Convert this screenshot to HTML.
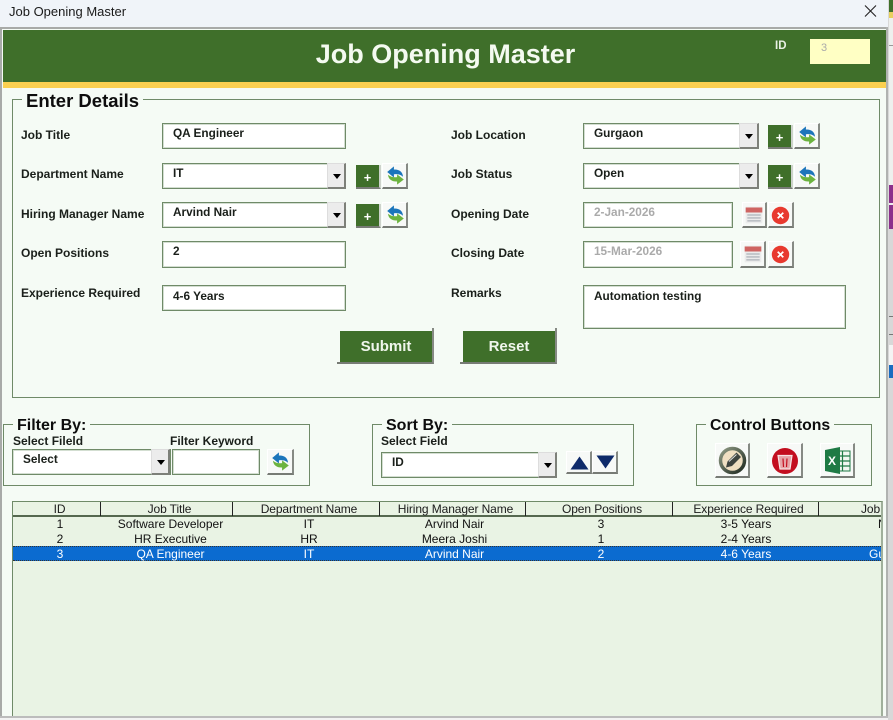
<!DOCTYPE html>
<html><head><meta charset="utf-8">
<style>
html,body{margin:0;padding:0;background:#f5fbf5}
#p{position:relative;width:893px;height:720px;overflow:hidden;background:#f5fbf5;font-family:"Liberation Sans",sans-serif;color:#111}
#p div{position:absolute;box-sizing:border-box}
.l{font-weight:bold;font-size:12px;line-height:16px;white-space:nowrap;color:#1a1f1a;margin-top:.5px}
.in{background:#fff;border:1px solid #6f8a68;box-shadow:inset 0 0 0 1px #d3ded1;font-weight:bold;font-size:11.8px;line-height:16px;padding:1px 0 0 10px;white-space:nowrap;color:#1a1f1a}
.ar{background:#ececec;border-right:2px solid #7d8079;border-bottom:2px solid #7d8079;border-left:1px solid #ddd;border-top:1px solid #ddd}
.ar:after{content:"";position:absolute;left:5px;top:10px;border-left:4.5px solid transparent;border-right:4.5px solid transparent;border-top:5px solid #000}
.b{background:#f7f9f7;border-right:2px solid #868a84;border-bottom:2px solid #777b75;border-top:1px solid #fff;border-left:1px solid #fff}
.g{background:#3f6f2a;border-right:2px solid #cdd2cb;border-bottom:2px solid #777b75;color:#fff;font-weight:bold;font-size:13px;text-align:center;line-height:19px}
.box{border:1px solid #6f8a68}
.lg{background:#f5fbf5;font-weight:bold;white-space:nowrap;padding:0 4px;color:#0d0d0d}
.th,.td{font-size:12px;line-height:15px;text-align:center;white-space:nowrap;overflow:hidden}
.th{top:502px;height:14px;line-height:15px;border-right:1px solid #222;color:#1b1b1b;letter-spacing:-.1px}
.s{color:#fff}
svg{position:absolute;left:0;top:0;display:block}
</style></head><body><div id="p">
<svg width="0" height="0" style="position:absolute"><defs>
<symbol id="rf" viewBox="0 0 24 24"><path d="M1.5 7.5 L10 0.5 L10 4.5 C16 4 21 7 21.5 13.5 C18 10.5 14 10 10 10.5 L10 14.5 Z" fill="#1b75bb"/><path d="M22.5 17 L14 23.5 L14 19.5 C8 20 3 17 2.5 11 C6 14 10 14.5 14 14 L14 10.5 Z" fill="#6cb33f"/></symbol>
<symbol id="cal" viewBox="0 0 24 24"><rect x="2" y="2" width="20" height="20" fill="#ebebeb"/><rect x="2" y="3" width="20" height="6" fill="#cf6462"/><g fill="#bcc0c5"><rect x="4" y="11" width="16" height="2"/><rect x="4" y="14.5" width="16" height="2"/><rect x="4" y="18" width="16" height="2"/></g></symbol>
<symbol id="xx" viewBox="0 0 24 24"><circle cx="12" cy="12" r="11" fill="#e8392f"/><path d="M8.5 8.5 L15.5 15.5 M15.5 8.5 L8.5 15.5" stroke="#fff" stroke-width="2.2"/></symbol>
<linearGradient id="ring" x1="0" y1="0" x2="1" y2="1"><stop offset="0" stop-color="#8f9a84"/><stop offset="1" stop-color="#1f2a20"/></linearGradient>
</defs></svg>

<!-- right sliver -->
<div style="left:888px;top:0;width:5px;height:720px;background:#d8d8d8"></div>
<div style="left:889px;top:0;width:4px;height:12px;background:#3f6f2a"></div>
<div style="left:889px;top:12px;width:4px;height:6px;background:#e8d060"></div>
<div style="left:889px;top:18px;width:4px;height:168px;background:#eef0ee"></div>
<div style="left:889px;top:45px;width:4px;height:1px;background:#999"></div>
<div style="left:889px;top:185px;width:4px;height:44px;background:#8c2f8c"></div>
<div style="left:889px;top:203px;width:4px;height:2px;background:#eee"></div>
<div style="left:889px;top:316px;width:4px;height:1px;background:#777"></div>
<div style="left:889px;top:334px;width:4px;height:1px;background:#777"></div>
<div style="left:889px;top:345px;width:4px;height:33px;background:#f4f4f4"></div>
<div style="left:889px;top:365px;width:4px;height:13px;background:#1a6cc0"></div>

<!-- title bar -->
<div style="left:0;top:0;width:888px;height:27px;background:#f0f4f9"></div>
<div style="left:9px;top:3px;font-size:13px;line-height:17px;color:#1a1a1a;white-space:nowrap">Job Opening Master</div>
<svg style="left:864px;top:5px" width="13" height="12" viewBox="0 0 13 12"><path d="M1 0.5 L12 11.5 M12 0.5 L1 11.5" stroke="#222" stroke-width="1.1" fill="none"/></svg>
<div style="left:0;top:27px;width:888px;height:2px;background:#a8aaa8"></div>
<div style="left:0;top:27px;width:2px;height:693px;background:#a8aaa8"></div>
<div style="left:886px;top:27px;width:2px;height:693px;background:#b0b2b0"></div>
<div style="left:0;top:716px;width:888px;height:2px;background:#bcbcbc"></div>
<div style="left:0;top:718px;width:888px;height:2px;background:#f2f2f2"></div>

<!-- header -->
<div style="left:3px;top:30px;width:883px;height:52px;background:#3f6f2a"></div>
<div style="left:3px;top:82px;width:883px;height:6px;background:#fbd050"></div>
<div style="left:3px;top:38px;width:885px;text-align:center;color:#f4faf0;font-weight:bold;font-size:27px;line-height:32px">Job Opening Master</div>
<div style="left:775px;top:38px;color:#e8f0e4;font-weight:bold;font-size:11.5px;line-height:16px">ID</div>
<div style="left:810px;top:39px;width:60px;height:25px;background:#ffffc4;color:#aaa;font-size:11px;line-height:18px;padding-left:11px">3</div>

<!-- enter details -->
<div class="box" style="left:12px;top:99px;width:868px;height:299px"></div>
<div class="lg" style="left:22px;top:90px;font-size:18.5px;line-height:21px">Enter Details</div>

<div class="l" style="left:21px;top:126px">Job Title</div>
<div class="l" style="left:21px;top:165px">Department Name</div>
<div class="l" style="left:21px;top:205px">Hiring Manager Name</div>
<div class="l" style="left:21px;top:244px">Open Positions</div>
<div class="l" style="left:21px;top:284px">Experience Required</div>
<div class="l" style="left:451px;top:126px">Job Location</div>
<div class="l" style="left:451px;top:165px">Job Status</div>
<div class="l" style="left:451px;top:205px">Opening Date</div>
<div class="l" style="left:451px;top:244px">Closing Date</div>
<div class="l" style="left:451px;top:284px">Remarks</div>

<div class="in" style="left:162px;top:123px;width:184px;height:26px">QA Engineer</div>
<div class="in" style="left:162px;top:163px;width:184px;height:26px">IT</div><div class="ar" style="left:327px;top:163px;width:19px;height:26px"></div>
<div class="in" style="left:162px;top:202px;width:184px;height:26px">Arvind Nair</div><div class="ar" style="left:327px;top:202px;width:19px;height:26px"></div>
<div class="in" style="left:162px;top:241px;width:184px;height:27px">2</div>
<div class="in" style="left:162px;top:285px;width:184px;height:26px;line-height:18px">4-6 Years</div>

<div class="in" style="left:583px;top:123px;width:176px;height:26px">Gurgaon</div><div class="ar" style="left:739px;top:123px;width:20px;height:26px"></div>
<div class="in" style="left:583px;top:163px;width:176px;height:26px">Open</div><div class="ar" style="left:739px;top:163px;width:20px;height:26px"></div>
<div class="in" style="left:583px;top:202px;width:150px;height:26px;color:#aaa">2-Jan-2026</div>
<div class="in" style="left:583px;top:241px;width:150px;height:27px;color:#aaa">15-Mar-2026</div>
<div class="in" style="left:583px;top:285px;width:263px;height:44px;line-height:18px">Automation testing</div>

<!-- + / refresh -->
<div class="g" style="left:356px;top:165px;width:25px;height:24px;line-height:25px">+</div>
<div class="b" style="left:382px;top:163px;width:26px;height:26px"><svg style="left:3px;top:2px" width="19" height="19"><use href="#rf"/></svg></div>
<div class="g" style="left:356px;top:204px;width:25px;height:24px;line-height:25px">+</div>
<div class="b" style="left:382px;top:202px;width:26px;height:26px"><svg style="left:3px;top:2px" width="19" height="19"><use href="#rf"/></svg></div>
<div class="g" style="left:768px;top:125px;width:25px;height:24px;line-height:25px">+</div>
<div class="b" style="left:794px;top:123px;width:26px;height:26px"><svg style="left:3px;top:2px" width="19" height="19"><use href="#rf"/></svg></div>
<div class="g" style="left:768px;top:165px;width:25px;height:24px;line-height:25px">+</div>
<div class="b" style="left:794px;top:163px;width:26px;height:26px"><svg style="left:3px;top:2px" width="19" height="19"><use href="#rf"/></svg></div>

<!-- date buttons -->
<div class="b" style="left:742px;top:202px;width:25px;height:26px"><svg style="left:1px;top:2px" width="20" height="20"><use href="#cal"/></svg></div>
<div class="b" style="left:768px;top:202px;width:26px;height:26px"><svg style="left:2px;top:3px" width="19" height="19"><use href="#xx"/></svg></div>
<div class="b" style="left:740px;top:241px;width:26px;height:27px"><svg style="left:2px;top:2px" width="20" height="20"><use href="#cal"/></svg></div>
<div class="b" style="left:768px;top:241px;width:26px;height:27px"><svg style="left:2px;top:3px" width="19" height="19"><use href="#xx"/></svg></div>

<!-- submit/reset -->
<div style="left:337px;top:328px;width:97px;height:36px;background:#f5fbf5;border-right:2px solid #868a84;border-bottom:2px solid #777b75"></div>
<div class="g" style="left:340px;top:331px;width:92px;height:31px;border:0;font-size:15px;line-height:31px;color:#f0f6ec">Submit</div>
<div style="left:460px;top:328px;width:97px;height:36px;background:#f5fbf5;border-right:2px solid #868a84;border-bottom:2px solid #777b75"></div>
<div class="g" style="left:463px;top:331px;width:92px;height:31px;border:0;font-size:15px;line-height:31px;color:#f0f6ec">Reset</div>

<!-- filter -->
<div class="box" style="left:3px;top:424px;width:307px;height:62px"></div>
<div class="lg" style="left:13px;top:417px;font-size:16px;line-height:18px">Filter By:</div>
<div class="l" style="left:13px;top:432px">Select Fileld</div>
<div class="l" style="left:170px;top:432px">Filter Keyword</div>
<div class="in" style="left:12px;top:449px;width:159px;height:26px">Select</div><div class="ar" style="left:151px;top:449px;width:19px;height:26px"></div>
<div class="in" style="left:172px;top:449px;width:88px;height:26px"></div>
<div class="b" style="left:267px;top:449px;width:27px;height:26px"><svg style="left:3px;top:2px" width="19" height="19"><use href="#rf"/></svg></div>

<!-- sort -->
<div class="box" style="left:372px;top:424px;width:262px;height:62px"></div>
<div class="lg" style="left:382px;top:417px;font-size:16px;line-height:18px">Sort By:</div>
<div class="l" style="left:381px;top:432px">Select Field</div>
<div class="in" style="left:381px;top:452px;width:176px;height:26px">ID</div><div class="ar" style="left:538px;top:452px;width:19px;height:26px"></div>
<div class="b" style="left:566px;top:451px;width:26px;height:23px"><svg style="left:3px;top:4px" width="19" height="14" viewBox="0 0 19 14"><path d="M9.5 0.5 L18.5 13.5 L0.5 13.5 Z" fill="#0e2a6a"/></svg></div>
<div class="b" style="left:592px;top:451px;width:26px;height:23px"><svg style="left:3px;top:3px" width="19" height="14" viewBox="0 0 19 14"><path d="M9.5 13.5 L18.5 0.5 L0.5 0.5 Z" fill="#0e2a6a"/></svg></div>

<!-- control -->
<div class="box" style="left:696px;top:424px;width:176px;height:62px"></div>
<div class="lg" style="left:706px;top:417px;font-size:15.8px;line-height:18px">Control Buttons</div>
<div class="b" style="left:715px;top:443px;width:35px;height:35px"><svg style="left:2px;top:2px" width="29" height="29" viewBox="0 0 29 29"><circle cx="14.5" cy="14.5" r="12" fill="#f0dfc2" stroke="url(#ring)" stroke-width="3.5"/><path d="M8 21.5 L9.5 15.5 L18.5 6.5 L23 11 L14 20 Z" fill="#3f443f"/><path d="M11 15.5 L18.5 8.5" stroke="#ddd" stroke-width="1"/></svg></div>
<div class="b" style="left:767px;top:443px;width:36px;height:35px"><svg style="left:3px;top:3px" width="28" height="28" viewBox="0 0 28 28"><circle cx="14" cy="14" r="13" fill="#c30e1f"/><path d="M7 8.5 L21 8.5 L19 22 L9 22 Z" fill="#e6a5a8" stroke="#f7e4e4" stroke-width="1.2"/><path d="M12 11.5 L12.5 20 M16 11.5 L15.5 20" stroke="#c30e1f" stroke-width="1.2"/></svg></div>
<div class="b" style="left:820px;top:443px;width:35px;height:35px"><svg style="left:2px;top:2px" width="29" height="29" viewBox="0 0 29 29"><rect x="12" y="5" width="15" height="20" fill="#f2f7f2" stroke="#1f7a45"/><path d="M12 10 H27 M12 15 H27 M12 20 H27 M19.5 5 V25" stroke="#1f7a45" stroke-width="1.2"/><path d="M2 4 L17 1 V28 L2 25 Z" fill="#1f7a45"/><text x="5" y="19" font-family="Liberation Sans" font-weight="bold" font-size="12" fill="#fff">X</text></svg></div>

<!-- table -->
<div style="left:12px;top:501px;width:871px;height:215px;background:#e9f3e4;border:1px solid #8ea389;border-top-color:#6f8a68;border-bottom:0;border-right:2px solid #a0b09b"></div>
<div style="left:12px;top:501px;width:1px;height:215px;background:#6f8a68"></div>
<div style="left:13px;top:515px;width:868px;height:1.5px;background:#55684f"></div>
<div class="th" style="left:13px;width:88px;padding-left:6px">ID</div>
<div class="th" style="left:101px;width:132px;padding-left:6px">Job Title</div>
<div class="th" style="left:233px;width:147px;padding-left:6px">Department Name</div>
<div class="th" style="left:380px;width:146px;padding-left:6px">Hiring Manager Name</div>
<div class="th" style="left:526px;width:147px;padding-left:6px">Open Positions</div>
<div class="th" style="left:673px;width:146px;padding-left:6px">Experience Required</div>
<div class="th" style="left:819px;width:62px;border:0;text-align:left;padding-left:42px">Job Location</div>

<div class="td" style="left:13px;top:517px;width:94px">1</div>
<div class="td" style="left:101px;top:517px;width:139px">Software Developer</div>
<div class="td" style="left:233px;top:517px;width:152px">IT</div>
<div class="td" style="left:380px;top:517px;width:149px">Arvind Nair</div>
<div class="td" style="left:526px;top:517px;width:150px">3</div>
<div class="td" style="left:673px;top:517px;width:146px">3-5 Years</div>
<div class="td" style="left:819px;top:517px;width:62px;text-align:left;padding-left:59px">N</div>

<div class="td" style="left:13px;top:532px;width:94px">2</div>
<div class="td" style="left:101px;top:532px;width:139px">HR Executive</div>
<div class="td" style="left:233px;top:532px;width:152px">HR</div>
<div class="td" style="left:380px;top:532px;width:149px">Meera Joshi</div>
<div class="td" style="left:526px;top:532px;width:150px">1</div>
<div class="td" style="left:673px;top:532px;width:146px">2-4 Years</div>

<div style="left:13px;top:546px;width:868px;height:15px;background:#0b6bd0;border-top:1px dotted #333;border-bottom:1px dotted #333"></div>
<div class="td s" style="left:13px;top:547px;width:94px">3</div>
<div class="td s" style="left:101px;top:547px;width:139px">QA Engineer</div>
<div class="td s" style="left:233px;top:547px;width:152px">IT</div>
<div class="td s" style="left:380px;top:547px;width:149px">Arvind Nair</div>
<div class="td s" style="left:526px;top:547px;width:150px">2</div>
<div class="td s" style="left:673px;top:547px;width:146px">4-6 Years</div>
<div class="td s" style="left:819px;top:547px;width:62px;text-align:left;padding-left:50px">Gurgaon</div>
</div></body></html>
